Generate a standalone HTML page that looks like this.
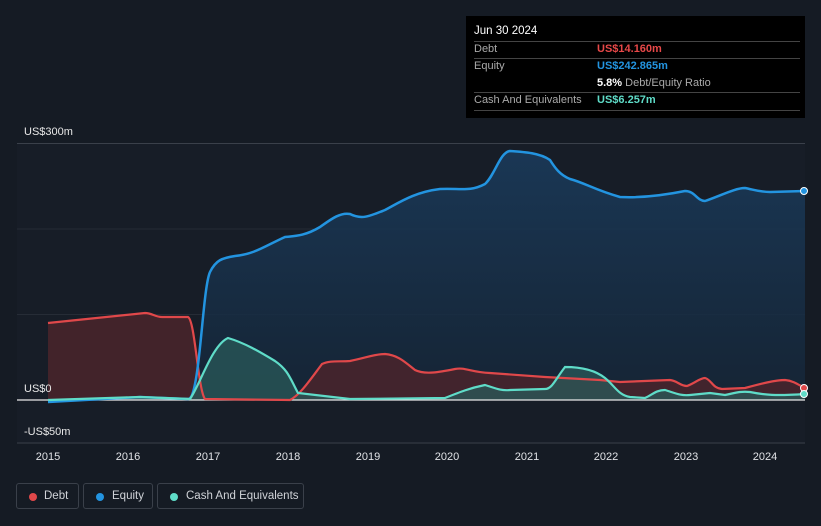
<!DOCTYPE html><html><head><meta charset="utf-8"><style>
body{margin:0;width:821px;height:526px;background:#151b24;font-family:"Liberation Sans",sans-serif;overflow:hidden;position:relative}
.tip{position:absolute;left:466px;top:16px;width:339px;height:102px;background:#000;}
.row{position:absolute;left:8px;width:326px;font-size:11px;color:#aaa;height:16px;line-height:16px;white-space:nowrap}
.lg{position:absolute;top:483px;height:26px;border:1px solid #3a404a;border-radius:3px;color:#d0d3d8;font-size:11.5px;line-height:25px;box-sizing:border-box;white-space:nowrap}
.lg i{position:absolute;left:12px;top:9px;width:8px;height:8px;border-radius:50%}
</style></head><body>
<svg width="821" height="526" style="position:absolute;left:0;top:0">
<defs>
<linearGradient id="ge" x1="0" y1="0" x2="0" y2="1"><stop offset="0" stop-color="#1a3a5a" stop-opacity=".9"/><stop offset="1" stop-color="#152638" stop-opacity=".8"/></linearGradient>
</defs>
<rect x="17" y="144" width="788" height="299" fill="#171d27"/>
<line x1="17" y1="143.5" x2="805" y2="143.5" stroke="#3a404a"/>
<line x1="17" y1="229" x2="805" y2="229" stroke="#262c36"/>
<line x1="17" y1="314.5" x2="805" y2="314.5" stroke="#262c36"/>
<line x1="17" y1="443" x2="805" y2="443" stroke="#3a404a"/>
<path d="M190,400 C200,400 202,290 210,272 C216,260 222,258 235,256 C255,254 265,246 285,237 C295,236 305,236 320,227 C330,220 340,212 350,214 C362,220 370,216 385,210 C400,202 415,192 440,189 C460,188 470,192 485,184 C495,175 500,152 510,151 C525,152 540,153 550,160 C555,168 560,175 570,179 C585,183 595,190 620,197 C640,198 660,196 685,191 C695,191 697,201 705,201 C720,196 735,188 745,188 C755,190 760,192 770,192 L805,191 L805,400 L190,400Z" fill="url(#ge)"/>
<path d="M48,323 L145,313 C152,313 155,317 162,317 L188,317 C195,320 198,390 205,399 L290,400 C300,395 310,380 322,364 C330,360 340,362 350,361 C365,358 375,354 385,354 C398,355 405,362 415,370 C425,375 440,372 455,369 C465,367 470,372 490,373 L545,377 L600,380 L620,382 L670,380 C678,381 680,386 687,386 C695,383 700,378 705,378 C712,380 712,388 722,389 L745,388 C760,384 775,380 785,380 C795,381 800,386 805,388 L805,400 L48,400Z" fill="#4a252c" fill-opacity=".85"/>
<path d="M48,400 L140,397 L190,399 C200,385 212,345 228,338 C245,343 260,352 275,361 C288,370 290,378 298,393 L350,399 L445,398 C460,392 470,388 485,385 C495,388 500,391 510,390 L545,389 C552,389 555,380 565,367 C580,367 595,370 605,378 C615,386 618,395 630,397 L645,398 C652,395 656,390 665,390 C675,393 680,396 690,395 L710,393 L725,395 C735,393 740,391 750,392 C765,395 775,396 805,394 L805,400Z" fill="#2a5a5a" fill-opacity=".75"/>
<line x1="17" y1="400" x2="805" y2="400" stroke="#e8e8e8" stroke-width="1.2"/>
<path d="M48,323 L145,313 C152,313 155,317 162,317 L188,317 C195,320 198,390 205,399 L290,400 C300,395 310,380 322,364 C330,360 340,362 350,361 C365,358 375,354 385,354 C398,355 405,362 415,370 C425,375 440,372 455,369 C465,367 470,372 490,373 L545,377 L600,380 L620,382 L670,380 C678,381 680,386 687,386 C695,383 700,378 705,378 C712,380 712,388 722,389 L745,388 C760,384 775,380 785,380 C795,381 800,386 805,388" fill="none" stroke="#e0484a" stroke-width="2.2"/>
<path d="M48,402 L140,397 L188,399 C200,400 202,290 210,272 C216,260 222,258 235,256 C255,254 265,246 285,237 C295,236 305,236 320,227 C330,220 340,212 350,214 C362,220 370,216 385,210 C400,202 415,192 440,189 C460,188 470,192 485,184 C495,175 500,152 510,151 C525,152 540,153 550,160 C555,168 560,175 570,179 C585,183 595,190 620,197 C640,198 660,196 685,191 C695,191 697,201 705,201 C720,196 735,188 745,188 C755,190 760,192 770,192 L805,191" fill="none" stroke="#2394e0" stroke-width="2.5"/>
<path d="M48,400 L140,397 L190,399 C200,385 212,345 228,338 C245,343 260,352 275,361 C288,370 290,378 298,393 L350,399 L445,398 C460,392 470,388 485,385 C495,388 500,391 510,390 L545,389 C552,389 555,380 565,367 C580,367 595,370 605,378 C615,386 618,395 630,397 L645,398 C652,395 656,390 665,390 C675,393 680,396 690,395 L710,393 L725,395 C735,393 740,391 750,392 C765,395 775,396 805,394" fill="none" stroke="#5fdcc8" stroke-width="2.2"/>
<circle cx="804" cy="191" r="3.5" fill="#2394e0" stroke="#fff" stroke-width="1"/>
<circle cx="804" cy="388" r="3.5" fill="#e0484a" stroke="#fff" stroke-width="1"/>
<circle cx="804" cy="394" r="3.5" fill="#5fdcc8" stroke="#fff" stroke-width="1"/>
<g fill="#e0e2e6" font-size="11" font-family="Liberation Sans" text-anchor="middle">
<text x="48" y="460">2015</text><text x="128" y="460">2016</text><text x="208" y="460">2017</text><text x="288" y="460">2018</text><text x="368" y="460">2019</text><text x="447" y="460">2020</text><text x="527" y="460">2021</text><text x="606" y="460">2022</text><text x="686" y="460">2023</text><text x="765" y="460">2024</text>
</g>
<g fill="#e8e8e8" font-size="11" font-family="Liberation Sans">
<text x="24" y="135">US$300m</text><text x="24" y="392">US$0</text><text x="24" y="435">-US$50m</text>
</g>
</svg>
<div class="tip">
<div class="row" style="top:7px;color:#fff;font-size:11.5px">Jun 30 2024</div>
<div style="position:absolute;left:8px;width:326px;top:25px;border-top:1px solid #444"></div>
<div class="row" style="top:25px">Debt<span style="position:absolute;left:123px;color:#e84848;font-weight:bold">US$14.160m</span></div>
<div style="position:absolute;left:8px;width:326px;top:42px;border-top:1px solid #444"></div>
<div class="row" style="top:42px">Equity<span style="position:absolute;left:123px;color:#2394e0;font-weight:bold">US$242.865m</span></div>
<div class="row" style="top:59px"><span style="position:absolute;left:123px;color:#fff;font-weight:bold">5.8%<span style="color:#aaa;font-weight:normal"> Debt/Equity Ratio</span></span></div>
<div style="position:absolute;left:8px;width:326px;top:76px;border-top:1px solid #444"></div>
<div class="row" style="top:76px">Cash And Equivalents<span style="position:absolute;left:123px;color:#5fdcc8;font-weight:bold">US$6.257m</span></div>
<div style="position:absolute;left:8px;width:326px;top:94px;border-top:1px solid #444"></div>
</div>
<div class="lg" style="left:16px;width:63px;padding-left:27px"><i style="background:#e0484a"></i>Debt</div>
<div class="lg" style="left:83px;width:70px;padding-left:28px"><i style="background:#2394e0"></i>Equity</div>
<div class="lg" style="left:157px;width:147px;padding-left:28px"><i style="background:#5fdcc8"></i>Cash And Equivalents</div>
</body></html>
